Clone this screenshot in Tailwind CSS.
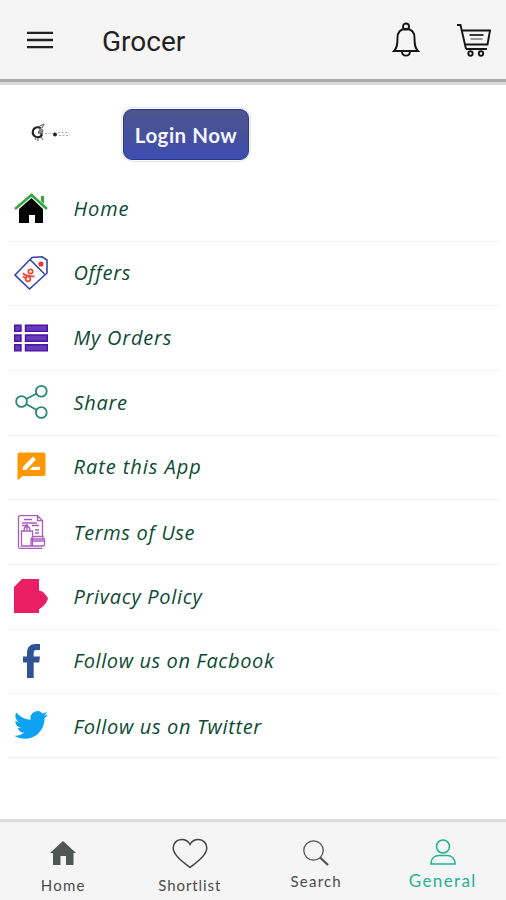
<!DOCTYPE html>
<html lang="en">
<head>
<meta charset="utf-8">
<title>Grocer</title>
<script src="https://cdn.jsdelivr.net/npm/@tailwindcss/browser@4"></script>
</head>
<body class="bg-white">
<div class="flex h-[900px] w-[506px] flex-col overflow-hidden bg-white font-['Lato',sans-serif]">
  <header class="flex h-[85px] shrink-0 items-start border-b-[3px] border-[#d9d9d9] bg-[#f5f5f5]">
    <div class="flex h-[82px] w-full items-center border-b-[3px] border-[#a9a9a9] pl-[27px] pr-[15px]">
      <svg class="h-[18px] w-[26px]" viewBox="0 0 26 18" stroke="#222" stroke-width="2.3"><path d="M0 1.8h26M0 9h26M0 16.2h26"/></svg>
      <h1 class="ml-[49px] mt-[5px] grow font-['Roboto',sans-serif] text-[28px] leading-none text-[#222]">Grocer</h1>
      <svg class="mr-[37px] h-[36px] w-[28px]" viewBox="0 0 28 36" fill="none" stroke="#151515" stroke-width="1.9"><circle cx="14" cy="4.500" r="3"/><path d="M2 29c3-3 3.500-6 3.500-13C5.500 10 9 7 14 7s8.500 3 8.500 9c0 7 .5 10 3.500 13zM10 29.500c.3 5.500 7.700 5.500 8 0"/></svg>
      <svg class="h-[34px] w-[34px]" viewBox="0 0 34 34" fill="none" stroke="#151515" stroke-width="1.900"><path d="M0 2h3.500L9 26M5.500 7.500H33l-2.500 14H8.500M9 26h21"/><path d="M12.500 12h14" stroke-width="1.700"/><path d="M13.500 16h12" stroke="#888" stroke-width="1.700"/><circle cx="13.500" cy="30.500" r="2.200"/><circle cx="24" cy="30.500" r="2.200"/></svg>
    </div>
  </header>

  <main class="flex grow flex-col">
    <section class="flex h-[92px] shrink-0 items-start pl-[31px] pt-[22px]">
      <div class="mt-[16px] flex w-[90px] items-center">
        <svg class="h-[20px] w-[40px]" viewBox="0 0 40 20"><path d="M10 5.500A5 5 0 1 0 10.500 12.500V9.500H7" fill="none" stroke="#222" stroke-width="2.200"/><path d="M7 4l6-3-2 4M4 15l1 2M7 15v3M10 14l2 3" fill="none" stroke="#555"/><circle cx="10" cy="8" r="2.500" fill="#888"/><circle cx="24" cy="11.500" r="2" fill="#222"/><path d="M14 10.500h8M27 9.500h11M28 12.500h11" stroke="#aaa" stroke-dasharray="2 1.500"/></svg>
      </div>
      <button class="h-[55px] w-[130px] rounded-[12px] border border-[#e4e4e8] bg-white p-[1px]"><span class="flex h-full w-full items-center justify-center rounded-[9px] border border-[#27378b] bg-linear-to-b from-[#4d5590] via-[#46509a] to-[#3f4db2] pt-[2px] text-[20.500px] font-bold tracking-[0.500px] text-[#f4f5ff]">Login Now</span></button>
    </section>

    <ul class="ml-[8px] mr-[6px] font-['Open_Sans',sans-serif] text-[20px] italic leading-none text-[#0c4a33]">
      <li class="flex h-[64.670px] items-center border-b-[1.500px] border-[#f3f3f3] pl-[6px]">
        <svg class="h-[34px] w-[34px]" viewBox="0 0 34 34"><path d="M17.500 6 29 17v14h-8v-8h-6v8H5V17z" fill="#000"/><path d="M27 4h3v8l-3-3z" fill="#35a63a"/><path d="M1 17 17.500 3 33 17" fill="none" stroke="#35a63a" stroke-width="2.500"/></svg>
        <span class="ml-[25.500px] mt-[1px] tracking-[0.900px]">Home</span></li>
      <li class="flex h-[64.670px] items-center border-b-[1.500px] border-[#f3f3f3] pl-[6px]">
        <svg class="-mt-[1px] h-[34px] w-[34px]" viewBox="0 0 34 34" fill="none" stroke-width="1.600"><path d="M1 19 18 1.500 28 .8 33 4v13L15.500 33zM16 3.500 30.500 18" stroke="#3444a6"/><circle cx="27" cy="8" r="1.800" fill="#e53935" stroke="#e53935"/><g stroke="#e84c3d" stroke-width="1.800"><circle cx="16.500" cy="15.500" r="2.200"/><circle cx="14" cy="23" r="2.300"/><path d="M9 17c2 4 7 2.500 11.500 3.500M9 20.500l3 2"/></g></svg>
        <span class="ml-[25.500px] tracking-[0.700px]">Offers</span></li>
      <li class="flex h-[64.670px] items-center border-b-[1.500px] border-[#f3f3f3] pl-[6px]">
        <svg class="-mt-[1px] h-[34px] w-[34px]" viewBox="0 0 34 34" fill="#673ab7" stroke="#4a12a8" stroke-width="1.400"><path d="M.7 4.200h6.300v6.200H.7zM11.500 4.200h21.800v6.200H11.500zM.7 14h6.300v6.200H.7zM11.500 14h21.800v6.200H11.500zM.7 23.700h6.300v6.200H.7zM11.500 23.700h21.800v6.200H11.500z"/></svg>
        <span class="ml-[25.500px] tracking-[0.800px]">My Orders</span></li>
      <li class="flex h-[64.670px] items-center border-b-[1.500px] border-[#f3f3f3] pl-[6px]">
        <svg class="-mt-[1px] h-[34px] w-[34px]" viewBox="0 0 34 34" fill="none" stroke="#27896f" stroke-width="1.800"><circle cx="7.500" cy="16.500" r="5.400"/><circle cx="27.300" cy="6.300" r="5.400"/><circle cx="27.300" cy="27.500" r="5.400"/><path d="m12.300 14 10.300-5.500M12.300 19l10.300 6"/></svg>
        <span class="ml-[25.500px] mt-[1px] tracking-[0.700px]">Share</span></li>
      <li class="flex h-[64.670px] items-center border-b-[1.500px] border-[#f3f3f3] pl-[6px]">
        <svg class="h-[34px] w-[34px]" viewBox="0 0 34 34"><path d="M5.500 2.500h24a2 2 0 0 1 2 2V24a2 2 0 0 1-2 2H8.500L3.500 30.500v-26a2 2 0 0 1 2-2z" fill="#ff9800"/><path d="m8.500 20 .8-3.800 9.700-9.700 3 3L12.300 20zM15.500 20l3.200-3.300H26V20z" fill="#fff"/></svg>
        <span class="ml-[25.500px] tracking-[0.950px]">Rate this App</span></li>
      <li class="flex h-[64.670px] items-center border-b-[1.500px] border-[#f3f3f3] pl-[6px]">
        <svg class="-mt-[1px] h-[34px] w-[34px]" viewBox="0 0 34 34" fill="none" stroke="#a95cbc" stroke-width="1.300"><path d="M20 33.300H6a1.500 1.500 0 0 1-1.500-1.500V2.200A1.500 1.500 0 0 1 6 .7h17.500l5 5V21M23.500.7v5h5M10 4.500h8M8 8h15M8 10.500h6M18 10.500h7M7.500 16h11v15h-11zM10 16c0-6 6-6 6 0M13 9v6M21 15h4M21 18h4M29 24v-2.500H19L17 24v7h11.500a2 2 0 0 0 2-2v-5H17M19 26h11M16 33.300h12.500"/></svg>
        <span class="ml-[25.500px] mt-[1px] tracking-[0.650px]">Terms of Use</span></li>
      <li class="flex h-[64.670px] items-center border-b-[1.500px] border-[#f3f3f3] pl-[6px]">
        <svg class="-mt-[1px] h-[34px] w-[34px]" viewBox="0 0 34 34" fill="#e91e63"><path d="M8 0H25v11.500l4 1.200 5 6.300c-1 5-5 9-9 11.300V34H0V8z"/></svg>
        <span class="ml-[25.500px] mt-[1px] tracking-[0.700px]">Privacy Policy</span></li>
      <li class="flex h-[64.670px] items-center border-b-[1.500px] border-[#f3f3f3] pl-[6px]">
        <svg class="-mt-[1px] h-[34px] w-[34px]" viewBox="0 0 34 34" fill="#2f5496"><path d="M13 34V18.500H9v-6h4V9c0-6 3.500-9 8.500-9H26v6h-3.500c-2 0-2.800 1-2.800 3v3.500H26l-.8 6h-5.500V34z"/></svg>
        <span class="ml-[25.500px] tracking-[0.600px]">Follow us on Facbook</span></li>
      <li class="flex h-[64.670px] items-center border-b-[3px] border-[#f8f8f8] pl-[6px]">
        <svg class="h-[34px] w-[34px]" viewBox="0 0 24 24" fill="#0da2f2"><path d="M23.950 4.570a10 10 0 0 1-2.820.780 4.960 4.960 0 0 0 2.160-2.730 10 10 0 0 1-3.130 1.190 4.920 4.920 0 0 0-8.380 4.490C7.690 8.090 4.070 6.130 1.640 3.160a4.920 4.920 0 0 0 1.520 6.570 4.900 4.900 0 0 1-2.230-.610v.060a4.920 4.920 0 0 0 3.950 4.830 5 5 0 0 1-2.210.080 4.940 4.940 0 0 0 4.600 3.420A9.870 9.870 0 0 1 0 19.540a14 14 0 0 0 7.550 2.210c9.050 0 14-7.500 14-13.980 0-.210 0-.420-.020-.630a9.940 9.940 0 0 0 2.420-2.570z"/></svg>
        <span class="ml-[25.500px] mt-[3px] tracking-[0.650px]">Follow us on Twitter</span></li>
    </ul>
  </main>

  <nav class="grid h-[81px] shrink-0 grid-cols-4 border-t-[3px] border-[#dcdcdc] bg-[#f5f5f5] text-[15px] leading-none text-[#4c4c4c]">
    <a class="flex flex-col items-center pt-[19px]"><svg class="h-[25px] w-[26px]" viewBox="0 0 26 25" fill="#505653"><path d="M13 0 26 12h-2.500v12H16v-9h-5.500v9H3V12H0z"/></svg><span class="mt-[12px] tracking-[1.200px]">Home</span></a>
    <a class="flex flex-col items-center pt-[16px]"><svg class="h-[31px] w-[36px]" viewBox="0 0 36 31" fill="none" stroke="#444" stroke-width="1.500"><path d="M18 29.500C11 24 1.200 17 1.200 10 1.200 5 5 1.500 9.500 1.500c4 0 7 2 8.500 5 1.500-3 4.500-5 8.500-5 4.500 0 8.300 3.500 8.300 8.500 0 7-9.800 14-16.800 19.500z"/></svg><span class="mt-[9px] tracking-[0.900px]">Shortlist</span></a>
    <a class="flex flex-col items-center pt-[18px]"><svg class="h-[26px] w-[26px]" viewBox="0 0 26 26" fill="none" stroke="#505050"><circle cx="10.500" cy="10.500" r="9.700" stroke-width="1.300"/><path d="m17 17.500 8 7.500" stroke-width="2.200"/></svg><span class="mt-[8px] tracking-[1.200px]">Search</span></a>
    <a class="flex flex-col items-center pt-[17px] text-[17px] text-[#1fb394]"><svg class="h-[26px] w-[26px]" viewBox="0 0 26 26" fill="none" stroke="#1fb394" stroke-width="1.600"><circle cx="13" cy="7.500" r="6.500"/><path d="M1 25c0-6 4-8.500 8-8.500h8c4 0 8 2.500 8 8.500z"/></svg><span class="mt-[7px] tracking-[1.400px]">General</span></a>
  </nav>
</div>
</body>
</html>
